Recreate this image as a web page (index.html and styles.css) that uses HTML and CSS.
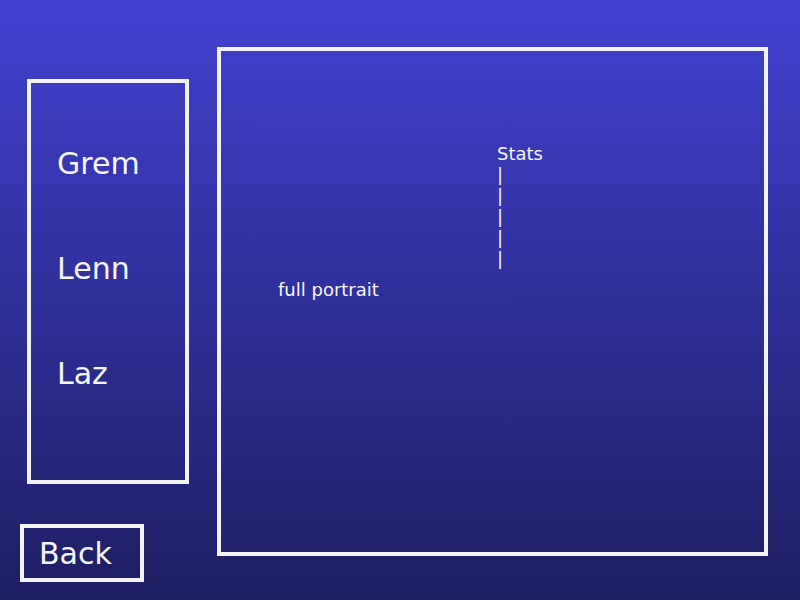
FILE: index.html
```html
<!DOCTYPE html>
<html lang="en">
<head>
    <meta charset="UTF-8">
    <meta name="viewport" content="width=device-width, initial-scale=1.0">
    <title>Party</title>
    <link rel="stylesheet" href="styles.css">
</head>
<body>
    <div class="screen">
        <div class="side">
            <ul class="roster">
                <li>Grem</li>
                <li>Lenn</li>
                <li>Laz</li>
            </ul>
            <button class="back">Back</button>
        </div>
        <div class="detail">
            <div class="portrait">full portrait</div>
            <div class="stats">
                <div>Stats</div>
                <div>|</div>
                <div>|</div>
                <div>|</div>
                <div>|</div>
                <div>|</div>
            </div>
        </div>
    </div>
</body>
</html>
```

FILE: styles.css
```css
:root {
    --line-color: #f4f4f8;
    --text-color: #f6f6fa;
    --top-color: #4141d1;
    --bottom-color: #1e1e62;
}
html, body {
    margin: 0;
    padding: 0;
}
body {
    width: 800px;
    height: 600px;
    overflow: hidden;
    font-family: 'DejaVu Sans', 'Liberation Sans', sans-serif;
    color: var(--text-color);
    background: linear-gradient(180deg, var(--top-color) 0%, var(--bottom-color) 100%);
}
.screen {
    display: flex;
    align-items: flex-start;
    height: 600px;
}
.side {
    display: flex;
    flex-direction: column;
    align-items: flex-start;
    padding-left: 20px;
}
.roster {
    list-style: none;
    margin: 79px 0 0 7px;
    padding: 63px 0 0 26px;
    box-sizing: border-box;
    width: 162px;
    height: 405px;
    border: 4px solid var(--line-color);
    display: flex;
    flex-direction: column;
    gap: 70px;
    font-size: 30px;
    line-height: 35px;
}
.back {
    margin-top: 40px;
    width: 124px;
    height: 58px;
    box-sizing: border-box;
    padding: 1px 0 0 15px;
    text-align: left;
    display: block;
    background: transparent;
    border: 4px solid var(--line-color);
    color: var(--text-color);
    font-family: inherit;
    font-size: 30px;
    line-height: 35px;
}
.detail {
    margin: 47px 0 0 28px;
    width: 551px;
    height: 509px;
    box-sizing: border-box;
    border: 4px solid var(--line-color);
    display: flex;
    align-items: flex-start;
    padding-left: 57px;
    font-size: 18px;
    line-height: 21px;
}
.portrait {
    width: 219px;
    flex: none;
    margin-top: 228px;
}
.stats {
    margin-top: 92px;
}
```
